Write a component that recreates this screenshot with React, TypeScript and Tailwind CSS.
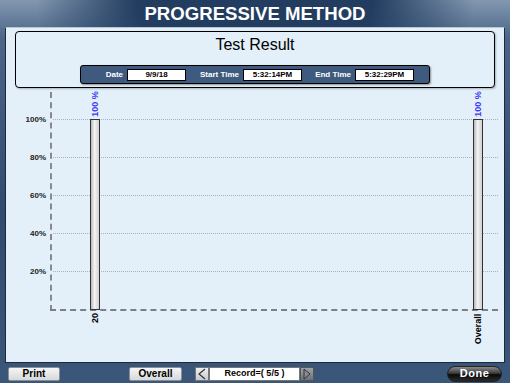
const gridRows = [
  { label: "100%", top: 31 },
  { label: "80%", top: 69 },
  { label: "60%", top: 107 },
  { label: "40%", top: 145 },
  { label: "20%", top: 183 },
]

const bars = [
  { name: "20", left: 84, value: "100 %" },
  { name: "Overall", left: 467, value: "100 %" },
]

function InfoField({ label, value, labelW }: { label: string; value: string; labelW: string }) {
  return (
    <div className="flex items-center">
      <span className={`${labelW} text-right pr-[4px] text-[8px] font-bold text-white`}>{label}</span>
      <span className="w-[59px] h-[12px] flex items-center justify-center bg-white border border-black text-[8px] font-bold text-black leading-none">
        {value}
      </span>
    </div>
  )
}

export default function App() {
  return (
    <div
      className="w-[510px] h-[383px] flex flex-col overflow-hidden bg-[radial-gradient(ellipse_at_50%_-20%,#223d60_35%,transparent_62%),linear-gradient(to_bottom,#8398b0_0%,#4a6588_10%,#2f4b6e_55%,#3a5679_100%)]"
      style={{ fontFamily: '"Liberation Sans", Arial, sans-serif' }}
    >
      {/* Title */}
      <div className="h-[27px] flex items-center justify-center text-white font-bold text-[18.6px] leading-none pt-[1px]">
        PROGRESSIVE METHOD
      </div>

      {/* Main panel */}
      <div className="mx-[5px] h-[336px] bg-[#e3eff9] border border-[#1c2a3a] border-t-[#b9c6d3] flex flex-col">
        {/* Header box */}
        <div className="mx-[9px] mt-[3px] h-[57px] rounded-[4px] border border-black bg-[#e3eff9] flex flex-col items-center shadow-[1px_1px_2px_rgba(0,0,0,0.25)]">
          <div className="text-[16px] text-black leading-none mt-[5px]">Test Result</div>
          <div className="mt-[12px] w-[350px] h-[19px] rounded-[3px] bg-[#3e5a7e] border border-black flex items-center pl-[4px] shadow-[1px_1px_2px_rgba(0,0,0,0.4)]">
            <InfoField label="Date" value="9/9/18" labelW="w-[42px]" />
            <InfoField label="Start Time" value="5:32:14PM" labelW="w-[57px]" />
            <InfoField label="End Time" value="5:32:29PM" labelW="w-[53px]" />
          </div>
        </div>

        {/* Chart */}
        <div className="relative flex-1">
          {gridRows.map((r) => (
            <div key={r.label}>
              <div
                className="absolute left-[47px] w-[445px] border-t border-dotted border-[#aeb2b6]"
                style={{ top: r.top }}
              />
              <div
                className="absolute left-0 w-[40px] text-right text-[8px] font-bold text-[#222] leading-none -translate-y-1/2"
                style={{ top: r.top + 1 }}
              >
                {r.label}
              </div>
            </div>
          ))}

          {/* axes */}
          <div className="absolute left-[44px] top-[4px] h-[219px] border-l-2 border-dashed border-[#86898d]" />
          <div className="absolute left-[44px] top-[221px] w-[448px] border-t-2 border-dashed border-[#7c7f83]" />

          {bars.map((b) => (
            <div key={b.name}>
              <div
                className="absolute top-[31px] w-[10px] h-[191px] border border-[#333] bg-[linear-gradient(to_right,#b8b8b8,#f4f4f4_45%,#d0d0d0)]"
                style={{ left: b.left }}
              />
              <div
                className="absolute top-[16px] -translate-x-1/2 -translate-y-1/2 -rotate-90 whitespace-nowrap text-[9px] font-bold text-[#3b3bf5] leading-none"
                style={{ left: b.left + 5 }}
              >
                {b.value}
              </div>
              <div
                className="absolute -translate-x-1/2 -translate-y-1/2 -rotate-90 whitespace-nowrap text-[9px] font-bold text-black leading-none"
                style={{ left: b.left + 5, top: b.name === "20" ? 230 : 241 }}
              >
                {b.name}
              </div>
            </div>
          ))}
        </div>
      </div>

      {/* Bottom bar */}
      <div className="flex items-center h-[20px] pt-[1px]">
        <button className="ml-[8px] w-[52px] h-[14px] rounded-[2px] border border-[#8a8f96] bg-[linear-gradient(to_bottom,#f6f6f6,#d6d8db)] text-[10px] font-bold text-black leading-none">
          Print
        </button>
        <button className="ml-[69px] w-[53px] h-[14px] rounded-[2px] border border-[#8a8f96] bg-[linear-gradient(to_bottom,#f6f6f6,#d6d8db)] text-[10px] font-bold text-black leading-none">
          Overall
        </button>
        <div className="ml-[13px] flex items-center">
          <div className="w-[14px] h-[14px] bg-[linear-gradient(to_bottom,#f0f0f0,#c8cacd)] border border-[#777] flex items-center justify-center">
            <svg width="10" height="12" viewBox="0 0 10 12">
              <path d="M8 1 L2 6 L8 11" fill="none" stroke="#333" strokeWidth="1.2" />
            </svg>
          </div>
          <div className="w-[91px] h-[14px] bg-white border border-[#777] flex items-center justify-center text-[9px] font-bold text-black leading-none">
            Record=( 5/5 )
          </div>
          <div className="w-[14px] h-[14px] bg-[linear-gradient(to_bottom,#9ea3a9,#6c7279)] border border-[#555] flex items-center justify-center">
            <svg width="10" height="12" viewBox="0 0 10 12">
              <path d="M2 1 L8 6 L2 11 Z" fill="#888c92" stroke="#333" strokeWidth="1" />
            </svg>
          </div>
        </div>
        <button className="ml-auto mr-[8px] w-[55px] h-[16px] rounded-[8px] border border-[#222] bg-[linear-gradient(to_bottom,#8a8a8a_0%,#3a3a3a_45%,#0a0a0a_55%,#2a2a2a_100%)] text-[11px] font-bold text-white leading-none tracking-[0.5px]">
          Done
        </button>
      </div>
    </div>
  )
}
